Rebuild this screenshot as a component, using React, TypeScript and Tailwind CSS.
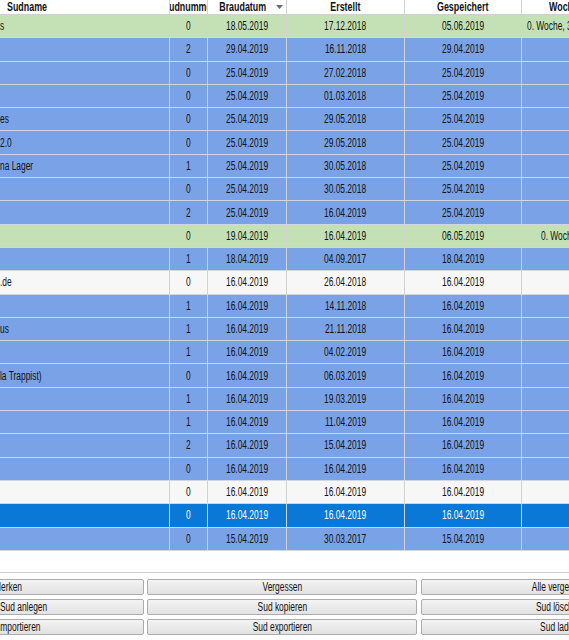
import React from 'react';

type Tone = 'green' | 'blue' | 'white' | 'sel';

type Row = {
  name: string;
  nr: string;
  brau: string;
  erstellt: string;
  gesp: string;
  woche?: string;
  wochePad?: boolean;
  tone: Tone;
};

const ROWS: Row[] = [
  { name: 's', nr: '0', brau: '18.05.2019', erstellt: '17.12.2018', gesp: '05.06.2019', woche: '0. Woche, 3. Tag', tone: 'green' },
  { name: '', nr: '2', brau: '29.04.2019', erstellt: '16.11.2018', gesp: '29.04.2019', tone: 'blue' },
  { name: '', nr: '0', brau: '25.04.2019', erstellt: '27.02.2018', gesp: '25.04.2019', tone: 'blue' },
  { name: '', nr: '0', brau: '25.04.2019', erstellt: '01.03.2018', gesp: '25.04.2019', tone: 'blue' },
  { name: 'es', nr: '0', brau: '25.04.2019', erstellt: '29.05.2018', gesp: '25.04.2019', tone: 'blue' },
  { name: '2.0', nr: '0', brau: '25.04.2019', erstellt: '29.05.2018', gesp: '25.04.2019', tone: 'blue' },
  { name: 'na Lager', nr: '1', brau: '25.04.2019', erstellt: '30.05.2018', gesp: '25.04.2019', tone: 'blue' },
  { name: '', nr: '0', brau: '25.04.2019', erstellt: '30.05.2018', gesp: '25.04.2019', tone: 'blue' },
  { name: '', nr: '2', brau: '25.04.2019', erstellt: '16.04.2019', gesp: '25.04.2019', tone: 'blue' },
  { name: '', nr: '0', brau: '19.04.2019', erstellt: '16.04.2019', gesp: '06.05.2019', woche: '0. Woche, 1. Tag', wochePad: true, tone: 'green' },
  { name: '', nr: '1', brau: '18.04.2019', erstellt: '04.09.2017', gesp: '18.04.2019', tone: 'blue' },
  { name: '.de', nr: '0', brau: '16.04.2019', erstellt: '26.04.2018', gesp: '16.04.2019', tone: 'white' },
  { name: '', nr: '1', brau: '16.04.2019', erstellt: '14.11.2018', gesp: '16.04.2019', tone: 'blue' },
  { name: 'us', nr: '1', brau: '16.04.2019', erstellt: '21.11.2018', gesp: '16.04.2019', tone: 'blue' },
  { name: '', nr: '1', brau: '16.04.2019', erstellt: '04.02.2019', gesp: '16.04.2019', tone: 'blue' },
  { name: 'la Trappist)', nr: '0', brau: '16.04.2019', erstellt: '06.03.2019', gesp: '16.04.2019', tone: 'blue' },
  { name: '', nr: '1', brau: '16.04.2019', erstellt: '19.03.2019', gesp: '16.04.2019', tone: 'blue' },
  { name: '', nr: '1', brau: '16.04.2019', erstellt: '11.04.2019', gesp: '16.04.2019', tone: 'blue' },
  { name: '', nr: '2', brau: '16.04.2019', erstellt: '15.04.2019', gesp: '16.04.2019', tone: 'blue' },
  { name: '', nr: '0', brau: '16.04.2019', erstellt: '16.04.2019', gesp: '16.04.2019', tone: 'blue' },
  { name: '', nr: '0', brau: '16.04.2019', erstellt: '16.04.2019', gesp: '16.04.2019', tone: 'white' },
  { name: '', nr: '0', brau: '16.04.2019', erstellt: '16.04.2019', gesp: '16.04.2019', tone: 'sel' },
  { name: '', nr: '0', brau: '15.04.2019', erstellt: '30.03.2017', gesp: '15.04.2019', tone: 'blue' },
];

const TONE_CLASS: Record<Tone, string> = {
  green: 'bg-[#c3e1b5] text-[#111]',
  blue: 'bg-[#7aa2e6] text-[#111]',
  white: 'bg-[#f7f7f7] text-[#111]',
  sel: 'bg-[#0a78d6] text-white',
};

const cell = 'h-full shrink-0 flex items-center overflow-hidden whitespace-nowrap border-r border-[#d2d2d2]';

// the app's font is much narrower than Liberation Sans, squeeze it
function T({ children, left, head }: { children: React.ReactNode; left?: boolean; head?: boolean }) {
  return (
    <span
      className={`inline-block shrink-0 ${head ? 'scale-x-[0.74]' : 'scale-x-[0.7]'} ${left ? 'origin-left' : 'origin-center'}`}
    >
      {children}
    </span>
  );
}

function Header() {
  return (
    <div className="flex h-[15px] shrink-0 border-b border-[#cfcfcf] bg-white font-bold text-[12px] text-[#111]">
      <div className={`${cell} w-[170px] pl-[7px]`}><T left head>Sudname</T></div>
      <div className={`${cell} w-[38px] justify-center`}><T head>Sudnummer</T></div>
      <div className={`${cell} w-[79px] justify-center relative`}>
        <span className="-ml-[8px] flex"><T head>Braudatum</T></span>
        <svg className="absolute right-[3px] top-[5px]" width="7" height="4" viewBox="0 0 7 4">
          <path d="M0 0h7L3.5 4z" fill="#6b6b6b" />
        </svg>
      </div>
      <div className={`${cell} w-[118px] justify-center`}><T head>Erstellt</T></div>
      <div className={`${cell} w-[117px] justify-center`}><T head>Gespeichert</T></div>
      <div className={`${cell} w-[140px] pl-[27px] border-r-0`}><T left head>Woche</T></div>
    </div>
  );
}

function TableRow({ row }: { row: Row }) {
  return (
    <div className={`flex h-[23.3px] shrink-0 border-b border-[#d2d6e0] text-[12px] ${TONE_CLASS[row.tone]}`}>
      <div className={`${cell} w-[170px]`}><T left>{row.name}</T></div>
      <div className={`${cell} w-[38px] justify-center`}><T>{row.nr}</T></div>
      <div className={`${cell} w-[79px] justify-center`}><T>{row.brau}</T></div>
      <div className={`${cell} w-[118px] justify-center`}><T>{row.erstellt}</T></div>
      <div className={`${cell} w-[117px] justify-center`}><T>{row.gesp}</T></div>
      <div className={`${cell} w-[140px] border-r-0 ${row.wochePad ? 'pl-[19px]' : 'pl-[5px]'}`}>
        <T left>{row.woche ?? ''}</T>
      </div>
    </div>
  );
}

const btn =
  'h-[16px] shrink-0 flex items-center rounded-[2px] border border-[#acacac] bg-gradient-to-b from-[#f3f3f3] to-[#e2e2e2] text-[12px] text-[#111] leading-none whitespace-nowrap overflow-hidden';

const BUTTONS: { left: string; shift: string; mid: string; right: string }[] = [
  { left: 'Merken', shift: '-ml-[7px]', mid: 'Vergessen', right: 'Alle vergessen' },
  { left: 'Sud anlegen', shift: '-ml-[1px]', mid: 'Sud kopieren', right: 'Sud löschen' },
  { left: 'Importieren', shift: '-ml-[3px]', mid: 'Sud exportieren', right: 'Sud laden' },
];

export default function App() {
  return (
    <div className="w-[569px] h-[640px] overflow-hidden bg-white flex flex-col font-['Liberation_Sans',Arial,sans-serif]">
      <div className="h-[573px] shrink-0 flex flex-col overflow-hidden border-b border-[#d0d0d0]">
        <Header />
        {ROWS.map((r, i) => (
          <TableRow key={i} row={r} />
        ))}
      </div>
      <div className="flex flex-col gap-[4px] pt-[6px] overflow-hidden">
        {BUTTONS.map((b, i) => (
          <div key={i} className="flex -ml-[3px]">
            <button type="button" className={`${btn} w-[147px] justify-start pl-[3px]`}>
              <span className={`flex ${b.shift}`}><T left>{b.left}</T></span>
            </button>
            <button type="button" className={`${btn} w-[270px] ml-[3px] justify-center`}>
              <T>{b.mid}</T>
            </button>
            <button type="button" className={`${btn} w-[276px] ml-[4px] justify-center`}>
              <T>{b.right}</T>
            </button>
          </div>
        ))}
      </div>
    </div>
  );
}
